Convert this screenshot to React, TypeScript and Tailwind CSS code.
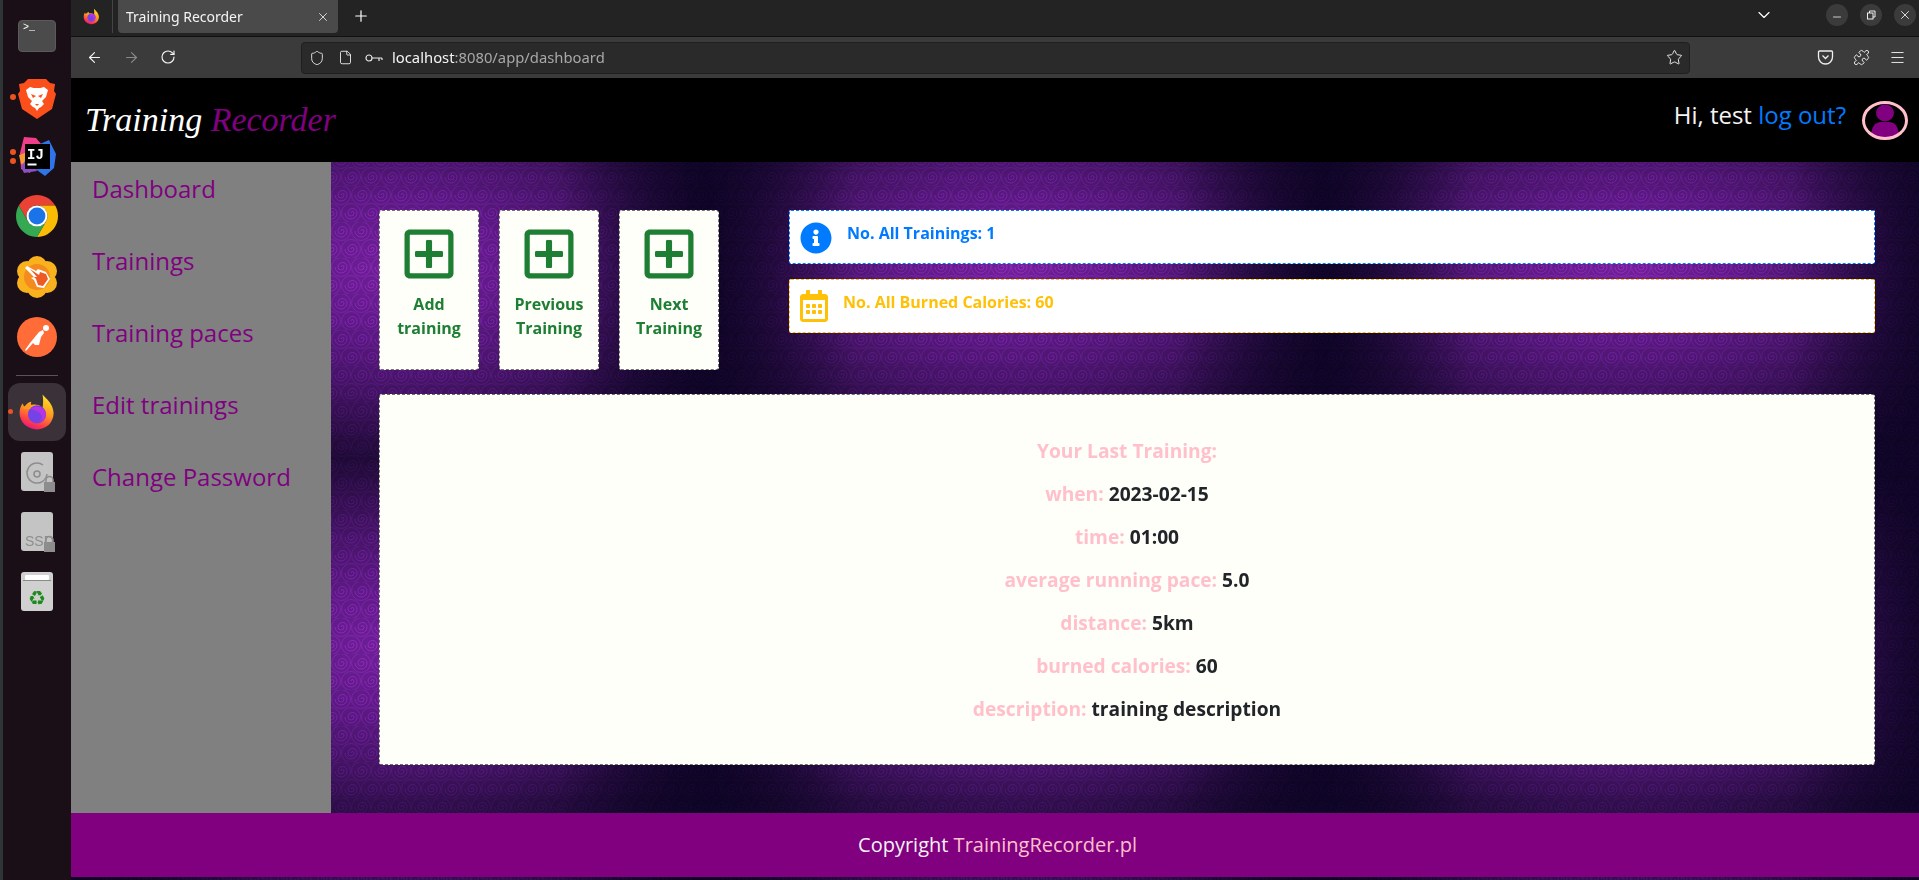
import React from "react";
import { ArrowLeft, ArrowRight, RotateCw, Shield, File, Star, Puzzle, Menu, Plus, X, ChevronDown, Minus } from "lucide-react";
import { FaRegPlusSquare, FaInfoCircle, FaRegCalendarAlt } from "react-icons/fa";

const Dot = ({ y = 0 }: { y?: number }) => (
  <span className="absolute left-[7px] w-[6px] h-[6px] rounded-full bg-[#e95420]" style={{ top: y }} />
);

const Firefox = ({ size }: { size: number }) => (
  <svg width={size} height={size} viewBox="0 0 48 48">
    <defs>
      <linearGradient id={`ff${size}`} x1="0.7" y1="0" x2="0.3" y2="1">
        <stop offset="0" stopColor="#ffe226" />
        <stop offset="0.45" stopColor="#ff9a1f" />
        <stop offset="0.8" stopColor="#ff3a4a" />
        <stop offset="1" stopColor="#e31587" />
      </linearGradient>
    </defs>
    <path d="M31 2c5 6 13 11 14 23 0 12-9 21-21 21S2 37 2 25c0-5 1.500-9 4-12 .5 2 1 3.500 2.500 4.500C10 14 13 11.500 17 11c-1 2-1 3 0 4 5-1 11 0 14 4 1-6 1-11 0-17z" fill={`url(#ff${size})`} />
    <circle cx="24" cy="27" r="11.500" fill="#7542e5" />
    <path d="M16 20c6-5 16-3 19 4 1 6-3 12-9 13 4-3 5-7 3-10-3-4-9-5-13-7z" fill="#b833e1" />
    <path d="M6 19c3-3 7-5 11-5-2 2-2 4-1 6-4 0-7 1-10-1z" fill="#ff9a1f" />
  </svg>
);

const Brave = () => (
  <svg width="38" height="40" viewBox="0 0 38 40">
    <path d="M10 0h18l4 4 5 1-1 7 2 3-4 15-9 6-6 4-6-4-9-6L0 15l2-3-1-7 5-1z" fill="#fb4f1c" />
    <path d="M12 8c3 1 4 1 7 1s4 0 7-1l4 3-2 7-4 4 2 3-3 3-2 1-2 3-2-3-2-1-3-3 2-3-4-4-2-7z" fill="#fff" />
    <path d="M13 15l5 2-3 2zM25 15l-5 2 3 2zM17 25h4l-2 2z" fill="#fb4f1c" />
  </svg>
);

const Idea = () => (
  <svg width="38" height="40" viewBox="0 0 38 40">
    <path d="M2 16L6 0l12 1 6 7-12 28-9-4z" fill="#ef3f8a" />
    <path d="M1 18l6-2 1 10-5 1z" fill="#f79a33" />
    <path d="M22 7l9-4 7 14-2 14-9 8-11-8z" fill="#2f74e8" />
    <path d="M3 30l8-12 8 16-13 2z" fill="#8a4fc0" />
    <rect x="7" y="7" width="25" height="25" fill="#000" />
    <text x="9" y="22" fill="#fff" fontSize="14" fontWeight="700" fontFamily="Liberation Mono, monospace">IJ</text>
    <rect x="9.500" y="26.500" width="9" height="2" fill="#fff" />
  </svg>
);

const Chrome = () => (
  <svg width="42" height="42" viewBox="4 4 40 40">
    <path d="M6.680 14A20 20 0 0 1 41.320 14H24A10 10 0 0 0 15.340 29Z" fill="#ea4335" />
    <path d="M41.320 14A20 20 0 0 1 24 44L32.660 29A10 10 0 0 0 24 14Z" fill="#fbbc04" />
    <path d="M24 44A20 20 0 0 1 6.680 14L15.340 29A10 10 0 0 0 32.660 29Z" fill="#34a853" />
    <circle cx="24" cy="24" r="10" fill="#fff" />
    <circle cx="24" cy="24" r="8" fill="#1a73e8" />
  </svg>
);

const Hand = () => (
  <svg width="42" height="42" viewBox="0 0 42 42">
    {[[21, 10], [31, 15], [31, 27], [21, 32], [11, 27], [11, 15]].map(([x, y]) => (
      <circle key={`${x}-${y}`} cx={x} cy={y} r="10" fill="#f9b21d" />
    ))}
    <circle cx="21" cy="21" r="13" fill="#f58a1f" />
    <path d="M9 12l2-2 9 5 2-2 8 3 4 7-6 9-7-1-3-7-3-2 3-1-3-3z" fill="#fff" />
    <path d="M14 13l9 6 1-3 6 2 2 5-5 7-5-1-2-6-2-2 3 0z" fill="#ee5a24" />
  </svg>
);

const Postman = () => (
  <svg width="40" height="40" viewBox="0 0 40 40">
    <circle cx="20" cy="20" r="20" fill="#ff6c37" />
    <circle cx="29" cy="11" r="3" fill="#fff" />
    <path d="M8 33l5-7 9-11 4-2 1 3-3 4-2 8-4 0-2-2-7 8z" fill="#fff" />
  </svg>
);

const Lock = ({ y }: { y: number }) => (
  <g fill="#8d8d8d">
    <rect x="23" y={y} width="11" height="10" />
    <path d={`M25 ${y}v-2a3.500 3.500 0 0 1 7 0v2`} fill="none" stroke="#8d8d8d" strokeWidth="1.500" />
  </g>
);

const Disk = () => (
  <svg width="34" height="40" viewBox="0 0 34 40">
    <rect x="0" y="0" width="32" height="39" rx="3" fill="#c4c4c4" />
    <path d="M26 22a10 10 0 1 1-4-9" fill="none" stroke="#8d8d8d" strokeWidth="1.500" />
    <circle cx="16" cy="22" r="3" fill="none" stroke="#8d8d8d" strokeWidth="1.500" />
    <Lock y={30} />
  </svg>
);

const Ssd = () => (
  <svg width="34" height="40" viewBox="0 0 34 40">
    <rect x="0" y="0" width="32" height="39" rx="3" fill="#c4c4c4" />
    <text x="4" y="34" fill="#8d8d8d" fontSize="14" fontFamily="Liberation Sans, sans-serif">SSD</text>
    <Lock y={30} />
  </svg>
);

const Trash = () => (
  <svg width="32" height="40" viewBox="0 0 32 40">
    <rect x="0" y="0" width="32" height="39" rx="3" fill="#d0d0d0" />
    <rect x="4" y="3" width="24" height="5" rx="1" fill="#fff" />
    <rect x="2" y="8" width="28" height="1" fill="#8a8a8a" />
    <text x="16" y="33" textAnchor="middle" fill="#1d8a1d" fontSize="20" fontFamily="DejaVu Sans, sans-serif">♻</text>
  </svg>
);

const Dock = () => (
  <div className="w-[71px] h-full bg-[#1a0f16] border-l-[3px] border-[#2f3535] flex flex-col items-center shrink-0">
    <div className="mt-[20px] w-[38px] h-[32px] rounded-[4px] bg-[#4b4b4b] border border-[#5a5a5a] text-white text-[10px] leading-[14px] pl-[4px] font-['Liberation_Mono',monospace]">{">_"}</div>
    <div className="relative mt-[27px] w-full flex justify-center"><Dot y={15} /><Brave /></div>
    <div className="relative mt-[18px] w-full flex justify-center"><Dot y={12} /><Dot y={21} /><Idea /></div>
    <div className="mt-[18px]"><Chrome /></div>
    <div className="mt-[19px]"><Hand /></div>
    <div className="mt-[19px]"><Postman /></div>
    <div className="mt-[18px] w-[42px] h-px bg-[#5a5358]" />
    <div className="relative mt-[7px] w-[58px] h-[58px] rounded-[12px] bg-[#3a3139] flex items-center justify-center">
      <span className="absolute left-0 top-[26px] w-[5px] h-[5px] rounded-full bg-[#e95420]" />
      <Firefox size={38} />
    </div>
    <div className="mt-[11px] pl-[2px]"><Disk /></div>
    <div className="mt-[20px] pl-[2px]"><Ssd /></div>
    <div className="mt-[20px]"><Trash /></div>
  </div>
);

const Pocket = () => (
  <svg width="17" height="17" viewBox="0 0 17 17" fill="none" stroke="#f0f0f0" strokeWidth="1.300">
    <path d="M2.500 2h12a1 1 0 0 1 1 1v5a7 7 0 0 1-14 0V3a1 1 0 0 1 1-1z" />
    <path d="M5.500 6.500l3 3 3-3" />
  </svg>
);

const KeyIcon = () => (
  <svg width="18" height="10" viewBox="0 0 18 10" fill="none" stroke="#e8e8e8" strokeWidth="1.200">
    <circle cx="4" cy="5" r="3" />
    <path d="M7 5h10M14 5v3M17 5v2" />
  </svg>
);

const WinBtn = ({ children }: { children: React.ReactNode }) => (
  <div className="w-[22px] h-[22px] rounded-full bg-[#3b3b3b] flex items-center justify-center text-[#f0f0f0]">{children}</div>
);

const BrowserChrome = () => (
  <div className="font-['Noto_Sans',sans-serif]">
    <div className="h-[37px] bg-[#232323] flex items-start text-white border-b border-[#111]">
      <div className="w-[42px] h-[33px] flex items-center justify-center border-r border-[#444]"><Firefox size={17} /></div>
      <div className="ml-[5px] w-[220px] h-[33px] bg-[#4a4a4a] rounded-b-[4px] flex items-center pl-[8px] pr-[8px] justify-between">
        <span className="text-[14px] text-[#f4f4f4]">Training Recorder</span>
        <X size={14} strokeWidth={1.3} />
      </div>
      <Plus className="ml-[14px] mt-[7px]" size={18} strokeWidth={1.6} />
      <div className="ml-auto flex items-center h-[30px]">
        <ChevronDown size={20} strokeWidth={1.4} />
        <div className="ml-[52px] mr-[3px] flex gap-[12px]">
          <WinBtn><Minus size={12} strokeWidth={1.6} className="mt-[4px]" /></WinBtn>
          <WinBtn>
            <svg width="10" height="10" viewBox="0 0 10 10" fill="none" stroke="#f0f0f0"><rect x="1.500" y="3" width="5.500" height="6" /><path d="M3.500 3V1h5.500v6H7" /></svg>
          </WinBtn>
          <WinBtn><X size={14} strokeWidth={1.5} /></WinBtn>
        </div>
      </div>
    </div>
    <div className="h-[41px] bg-[#3b3b3b] flex items-center text-[#f4f4f4]">
      <div className="ml-[15px] flex gap-[20px]">
        <ArrowLeft size={17} strokeWidth={1.6} />
        <ArrowRight size={17} strokeWidth={1.6} className="text-[#8a8a8a]" />
        <RotateCw size={16} strokeWidth={1.7} />
      </div>
      <div className="ml-[125px] w-[1389px] h-[32px] bg-[#2b2a2a] rounded-[4px] border border-[#1f1f1f] flex items-center">
        <Shield size={16} strokeWidth={1.3} className="ml-[7px]" />
        <File size={15} strokeWidth={1.4} className="ml-[13px]" />
        <span className="ml-[12px]"><KeyIcon /></span>
        <span className="ml-[9px] text-[14.800px] text-[#f4f4f4]">localhost<span className="text-[#a8a8a8]">:8080/app/dashboard</span></span>
        <Star size={17} strokeWidth={1.3} className="ml-auto mr-[6px]" />
      </div>
      <div className="ml-[127px] flex items-center gap-[19px]">
        <Pocket />
        <Puzzle size={17} strokeWidth={1.3} />
        <Menu size={17} strokeWidth={1.3} />
      </div>
    </div>
  </div>
);

const Spirals = () => {
  const spots = [[10, 9], [30, 9], [0, 27], [20, 27], [40, 27]];
  return (
    <svg className="absolute inset-0 w-full h-full mix-blend-overlay pointer-events-none" aria-hidden="true">
      <defs>
        <pattern id="spirals" width="40" height="36" patternUnits="userSpaceOnUse">
          {spots.map(([x, y]) => (
            <g key={`${x}-${y}`} transform={`translate(${x} ${y})`} fill="none" stroke="#fff" strokeOpacity="0.36" strokeWidth="1">
              <path d="M0 0a1.500 1.500 0 0 1 3 0a3 3 0 0 1-6 0a4.500 4.500 0 0 1 9 0a6 6 0 0 1-12 0" />
              <circle r="9.500" strokeOpacity="0.26" />
            </g>
          ))}
        </pattern>
      </defs>
      <rect width="100%" height="100%" fill="url(#spirals)" />
    </svg>
  );
};

const Card = ({ a, b }: { a: string; b: string }) => (
  <div className="w-[100px] h-[160px] bg-[#fffff9] border border-dashed border-[#6f6f6f] rounded-[3px] flex flex-col items-center pt-[15px] text-[#1e7e34] font-bold text-[16px] leading-[24px] text-center">
    <FaRegPlusSquare size={56} />
    <div className="mt-[10px]">{a}</div>
    <div>{b}</div>
  </div>
);

const rows: [string, string][] = [
  ["when:", "2023-02-15"],
  ["time:", "01:00"],
  ["average running pace:", "5.0"],
  ["distance:", "5km"],
  ["burned calories:", "60"],
  ["description:", "training description"],
];

const nav = ["Dashboard", "Trainings", "Training paces", "Edit trainings", "Change Password"];

const Site = () => (
  <div className="relative flex-1 overflow-hidden bg-[#0e0424] bg-[linear-gradient(90deg,#0e0424_0%,#0e042400_24%,#0e042400_76%,#0e0424_100%),radial-gradient(ellipse_400px_230px_at_50%_50%,#70209a_0%,#5f1a86_25%,#431363_52%,#240b3c_78%,#0f0524_100%)] bg-[size:616px_380px] bg-[position:20px_0] font-['Open_Sans','Noto_Sans',sans-serif]">
    <Spirals />
    <header className="relative h-[84px] bg-black flex items-center">
      <div className="ml-[14px] font-['Liberation_Serif',serif] italic text-[34px] text-white mt-[-1px]">
        Training <span className="text-[#800080]">Recorder</span>
      </div>
      <div className="ml-auto flex items-center text-[24px] mr-[11px]">
        <span className="text-[#f4f4f4] mt-[-11px]">Hi, test <span className="text-[#007bff]">log out?</span></span>
        <svg className="ml-[16px]" width="46" height="39" viewBox="0 0 46 39">
          <clipPath id="av"><ellipse cx="23" cy="19.500" rx="21.500" ry="18" /></clipPath>
          <g clipPath="url(#av)" fill="#800080">
            <ellipse cx="23" cy="12" rx="9" ry="8.500" />
            <path d="M9 36c0-10 4-15 10-15h8c6 0 10 5 10 15z" />
          </g>
          <ellipse cx="23" cy="19.500" rx="21.500" ry="18" fill="none" stroke="#ffc0cb" strokeWidth="3" />
        </svg>
      </div>
    </header>
    <div className="relative flex h-[651px]">
      <aside className="w-[260px] bg-[#808080] pl-[21px] pt-[9px] text-[24px] leading-[36px] text-[#800080] flex flex-col gap-[36px]">
        {nav.map((n) => <div key={n}>{n}</div>)}
      </aside>
      <main className="flex-1 pl-[48px] pr-[44px] pt-[48px]">
        <div className="flex">
          <div className="flex gap-[20px]">
            <Card a="Add" b="training" />
            <Card a="Previous" b="Training" />
            <Card a="Next" b="Training" />
          </div>
          <div className="ml-[70px] flex-1 flex flex-col gap-[15px] font-bold text-[16px] leading-[24px]">
            <div className="h-[54px] bg-white border border-dashed border-[#007bff] rounded-[2px] text-[#007bff] flex items-start">
              <FaInfoCircle size={32} className="ml-[10px] mt-[11px]" />
              <span className="ml-[15px] mt-[10px]">No. All Trainings: 1</span>
            </div>
            <div className="h-[54px] bg-white border border-dashed border-[#ffc107] rounded-[2px] text-[#ffc107] flex items-start">
              <FaRegCalendarAlt size={32} className="ml-[8px] mt-[10px]" />
              <span className="ml-[13px] mt-[10px]">No. All Burned Calories: 60</span>
            </div>
          </div>
        </div>
        <section className="mt-[24px] h-[371px] bg-[#fffff9] border border-dashed border-[#6f6f6f] rounded-[3px] pt-[41px] text-center font-bold text-[19.200px] leading-[29px] text-[#ffc0cb] flex flex-col gap-[14px]">
          <div>Your Last Training:</div>
          {rows.map(([k, v]) => (
            <div key={k}>{k} <span className="text-[#212529]">{v}</span></div>
          ))}
        </section>
      </main>
    </div>
    <footer className="relative h-[64px] bg-[#800080] flex items-center justify-center text-[20px] text-[#f4f4f4] pl-[5px]">
      <span>Copyright <span className="text-[#ffc0cb]">TrainingRecorder.pl</span></span>
    </footer>
  </div>
);

export default function App() {
  return (
    <div className="w-full h-screen flex overflow-hidden bg-black">
      <Dock />
      <div className="flex-1 flex flex-col min-w-0">
        <BrowserChrome />
        <Site />
      </div>
    </div>
  );
}
